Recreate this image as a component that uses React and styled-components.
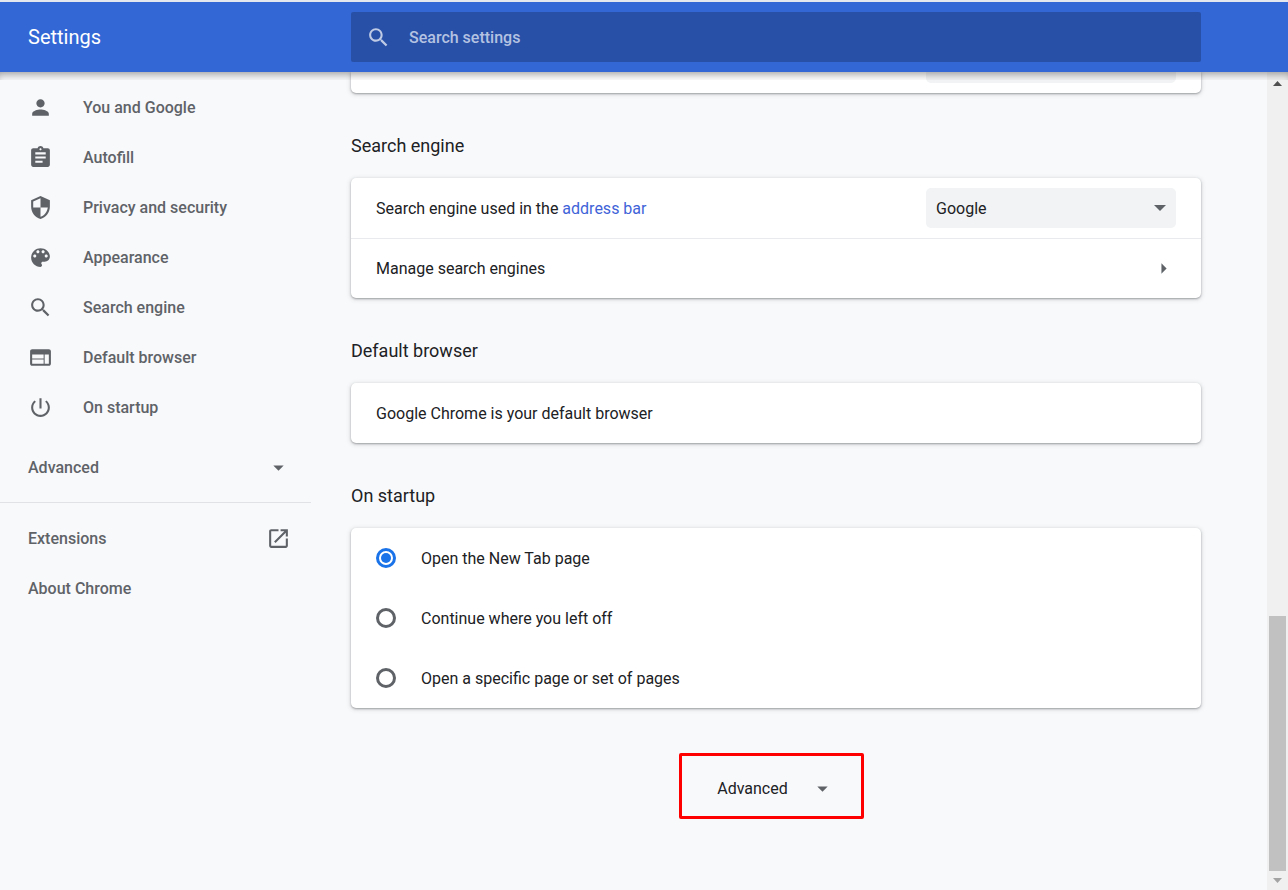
import React, { useState } from 'react';
import styled, { createGlobalStyle, css } from 'styled-components';

const GlobalStyle = createGlobalStyle`
  * {
    box-sizing: border-box;
  }

  body {
    margin: 0;
    background: #f8f9fb;
    color: #202124;
    font-family: Roboto, 'Liberation Sans', sans-serif;
    font-size: 16px;
    line-height: 25px;
  }
`;

const Page = styled.div`
  display: flex;
  flex-direction: column;
  min-height: 100vh;
  border-top: 2px solid #e4e8ee;
`;

const Header = styled.header`
  display: flex;
  align-items: center;
  height: 70px;
  padding: 0 87px 0 28px;
  background: #3367d6;
  color: #fff;
  position: relative;

  &::after {
    content: '';
    position: absolute;
    top: 100%;
    left: 0;
    right: 0;
    height: 8px;
    box-shadow: inset 0 6px 8px -4px rgba(0, 0, 0, 0.4);
    pointer-events: none;
  }
`;

const Title = styled.h1`
  flex: 0 0 323px;
  margin: 0;
  font-size: 20px;
  font-weight: 400;
`;

const SearchBox = styled.label`
  display: flex;
  flex: 1;
  align-items: center;
  gap: 18px;
  height: 50px;
  padding: 0 15px;
  border-radius: 2px;
  background: #2850a7;
  color: #bfcae5;
`;

const SearchInput = styled.input`
  flex: 1;
  min-width: 0;
  padding: 0;
  border: 0;
  outline: 0;
  background: transparent;
  color: #fff;
  font: inherit;
  font-weight: 500;

  &::placeholder {
    color: #b4c2e2;
    opacity: 1;
  }
`;

const Body = styled.div`
  display: flex;
  flex: 1;
`;

const Sidebar = styled.nav`
  flex: 0 0 311px;
  padding-top: 10px;
`;

const menuItem = css`
  display: flex;
  align-items: center;
  width: 100%;
  height: 50px;
  padding: 0 20px 0 28px;
  border: 0;
  background: transparent;
  color: #5f6368;
  font: inherit;
  font-weight: 500;
  text-align: left;
  text-decoration: none;
  cursor: pointer;
`;

const MenuLink = styled.a`
  ${menuItem}
  gap: 30px;
  justify-content: ${props => (props.$spread ? 'space-between' : 'flex-start')};
`;

const MenuToggle = styled.button`
  ${menuItem}
  justify-content: space-between;
  margin-top: 10px;
`;

const MenuDivider = styled.hr`
  margin: 10px 0;
  border: 0;
  border-top: 1px solid #e0e2e5;
`;

const Main = styled.main`
  flex: 1;
  min-width: 0;
  padding: 0 66px 45px 40px;
`;

const Card = styled.div`
  border-radius: ${props => (props.$cut ? '0 0 5px 5px' : '5px')};
  background: #fff;
  box-shadow: 0 1px 2px rgba(60, 64, 67, 0.4), 0 1px 4px 1px rgba(60, 64, 67, 0.15);
`;

const CutRow = styled.div`
  display: flex;
  justify-content: flex-end;
  height: 21px;
  padding: 0 25px;
`;

const CutSelect = styled.div`
  width: 250px;
  height: 11px;
  border-radius: 0 0 5px 5px;
  background: #f1f3f4;
`;

const SectionTitle = styled.h2`
  margin: 0;
  padding: 40px 0 20px;
  font-size: 18px;
  font-weight: 400;
`;

const Row = styled.div`
  display: flex;
  align-items: center;
  justify-content: space-between;
  height: 60px;
  padding: 0 25px;
`;

const RowButton = styled.button`
  display: flex;
  align-items: center;
  justify-content: space-between;
  width: 100%;
  height: 60px;
  padding: 0 25px;
  border: 0;
  border-top: 1px solid #e8eaed;
  background: transparent;
  color: inherit;
  font: inherit;
  cursor: pointer;
`;

const TextLink = styled.a`
  color: #3f63d8;
  text-decoration: none;
`;

const SelectWrap = styled.div`
  display: grid;
  align-items: center;
  width: 250px;

  > * {
    grid-area: 1 / 1;
  }
`;

const SelectArrow = styled.svg`
  justify-self: end;
  width: 12px;
  height: 6px;
  margin-right: 10px;
  fill: #5f6368;
  pointer-events: none;
`;

const Select = styled.select`
  width: 100%;
  height: 40px;
  padding: 0 10px;
  border: 0;
  border-radius: 5px;
  appearance: none;
  background: #f1f3f4;
  color: inherit;
  font: inherit;
`;

const RadioRow = styled.label`
  display: flex;
  align-items: center;
  gap: 25px;
  height: 60px;
  padding: 0 25px;
  cursor: pointer;
`;

const Radio = styled.input`
  width: 20px;
  height: 20px;
  margin: 0;
  padding: 2px;
  border: 3px solid #5f6368;
  border-radius: 50%;
  appearance: none;

  &:checked {
    border-color: #1a73e8;
    background: #1a73e8 content-box;
  }
`;

const AdvancedArea = styled.div`
  display: flex;
  justify-content: center;
  padding-top: 60px;
`;

const AdvancedButton = styled.button`
  display: flex;
  align-items: center;
  gap: 22px;
  height: 40px;
  padding: 0;
  border: 0;
  background: transparent;
  color: inherit;
  font: inherit;
  cursor: pointer;
  position: relative;

  &::after {
    content: '';
    position: absolute;
    inset: -15px -29px -11px -38px;
    border: 3px solid #fe0000;
    border-radius: 2px;
  }
`;

const Scrollbar = styled.div`
  display: flex;
  flex: 0 0 21px;
  flex-direction: column;
  align-items: center;
  background: #f0f0f0;
`;

const ScrollArrow = styled.svg`
  width: 9px;
  height: 5px;
  margin: ${props => (props.$down ? '7px 0' : '9px 0 7px')};
  fill: ${props => (props.$down ? '#a3a3a3' : '#505050')};
`;

const ScrollThumb = styled.div`
  width: 17px;
  height: 255px;
  margin-top: auto;
  background: #c1c1c1;
`;

const IconSvg = styled.svg`
  flex: none;
  width: 25px;
  height: 25px;
  fill: currentColor;
`;

const Caret = styled(IconSvg)`
  color: #5f6368;
`;

const icons = {
  person: 'M12 12c2.21 0 4-1.79 4-4s-1.79-4-4-4-4 1.79-4 4 1.79 4 4 4zm0 2c-2.67 0-8 1.34-8 4v2h16v-2c0-2.66-5.33-4-8-4z',
  assignment: 'M19 3h-4.18C14.4 1.84 13.3 1 12 1c-1.3 0-2.4.84-2.82 2H5c-1.1 0-2 .9-2 2v14c0 1.1.9 2 2 2h14c1.1 0 2-.9 2-2V5c0-1.1-.9-2-2-2zm-7 0c.55 0 1 .45 1 1s-.45 1-1 1-1-.45-1-1 .45-1 1-1zm2 14H7v-2h7v2zm3-4H7v-2h10v2zm0-4H7V7h10v2z',
  security: 'M12 1L3 5v6c0 5.55 3.84 10.74 9 12 5.16-1.26 9-6.45 9-12V5l-9-4zm0 10.99h7c-.53 4.12-3.28 7.79-7 8.94V12H5V6.3l7-3.11v8.8z',
  palette: 'M12 3c-4.97 0-9 4.03-9 9s4.03 9 9 9c.83 0 1.5-.67 1.5-1.5 0-.39-.15-.74-.39-1.01-.23-.26-.38-.61-.38-.99 0-.83.67-1.5 1.5-1.5H16c2.76 0 5-2.24 5-5 0-4.42-4.03-8-9-8zm-5.5 9c-.83 0-1.5-.67-1.5-1.5S5.67 9 6.5 9 8 9.67 8 10.5 7.33 12 6.5 12zm3-4C8.67 8 8 7.33 8 6.5S8.67 5 9.5 5s1.5.67 1.5 1.5S10.33 8 9.5 8zm5 0c-.83 0-1.5-.67-1.5-1.5S13.67 5 14.5 5s1.5.67 1.5 1.5S15.33 8 14.5 8zm3 4c-.83 0-1.5-.67-1.5-1.5S16.67 9 17.5 9s1.5.67 1.5 1.5-.67 1.5-1.5 1.5z',
  search: 'M15.5 14h-.79l-.28-.27C15.41 12.59 16 11.11 16 9.5 16 5.91 13.09 3 9.5 3S3 5.91 3 9.5 5.91 16 9.5 16c1.61 0 3.09-.59 4.23-1.57l.27.28v.79l5 4.99L20.49 19l-4.99-5zm-6 0C7.01 14 5 11.99 5 9.5S7.01 5 9.5 5 14 7.01 14 9.5 11.99 14 9.5 14z',
  web: 'M20 4H4c-1.1 0-1.99.9-1.99 2L2 18c0 1.1.9 2 2 2h16c1.1 0 2-.9 2-2V6c0-1.1-.9-2-2-2zm-5 14H4v-4h11v4zm0-5H4V9h11v4zm5 5h-4V9h4v9z',
  power: 'M13 3h-2v10h2V3zm4.83 2.17l-1.42 1.42C17.99 7.86 19 9.81 19 12c0 3.87-3.13 7-7 7s-7-3.13-7-7c0-2.19 1.01-4.14 2.58-5.42L6.17 5.17C4.23 6.82 3 9.26 3 12c0 4.97 4.03 9 9 9s9-4.03 9-9c0-2.74-1.23-5.18-3.17-6.83z',
  openInNew: 'M19 19H5V5h7V3H5c-1.11 0-2 .9-2 2v14c0 1.1.89 2 2 2h14c1.1 0 2-.9 2-2v-7h-2v7zM14 3v2h3.59l-9.83 9.83 1.41 1.41L19 6.41V10h2V3h-7z',
  caretDown: 'M7 10l5 5 5-5z',
  caretRight: 'M10 7v10l5-5z',
};

const menu = [
  { icon: 'person', label: 'You and Google' },
  { icon: 'assignment', label: 'Autofill' },
  { icon: 'security', label: 'Privacy and security' },
  { icon: 'palette', label: 'Appearance' },
  { icon: 'search', label: 'Search engine' },
  { icon: 'web', label: 'Default browser' },
  { icon: 'power', label: 'On startup' },
];

const startupOptions = [
  'Open the New Tab page',
  'Continue where you left off',
  'Open a specific page or set of pages',
];

const Icon = ({ name, as: Svg = IconSvg }) => (
  <Svg viewBox="0 0 24 24" aria-hidden="true">
    <path d={icons[name]} />
  </Svg>
);

const App = () => {
  const [startup, setStartup] = useState(startupOptions[0]);

  return (
    <Page>
      <GlobalStyle />
      <Header>
        <Title>Settings</Title>
        <SearchBox>
          <Icon name="search" />
          <SearchInput type="text" placeholder="Search settings" aria-label="Search settings" />
        </SearchBox>
      </Header>

      <Body>
        <Sidebar>
          {menu.map(item => (
            <MenuLink key={item.label} href="#">
              <Icon name={item.icon} />
              {item.label}
            </MenuLink>
          ))}
          <MenuToggle type="button">
            Advanced
            <Icon name="caretDown" />
          </MenuToggle>
          <MenuDivider />
          <MenuLink href="#" $spread>
            Extensions
            <Icon name="openInNew" />
          </MenuLink>
          <MenuLink href="#">About Chrome</MenuLink>
        </Sidebar>

        <Main>
          {/* end of the section scrolled under the header */}
          <Card $cut>
            <CutRow>
              <CutSelect />
            </CutRow>
          </Card>

          <SectionTitle>Search engine</SectionTitle>
          <Card>
            <Row>
              <span>
                Search engine used in the <TextLink href="#">address bar</TextLink>
              </span>
              <SelectWrap>
                <Select aria-label="Search engine used in the address bar" defaultValue="Google">
                  <option>Google</option>
                </Select>
                <SelectArrow viewBox="0 0 12 6" aria-hidden="true">
                  <path d="M0 0h12L6 6z" />
                </SelectArrow>
              </SelectWrap>
            </Row>
            <RowButton type="button">
              Manage search engines
              <Icon name="caretRight" as={Caret} />
            </RowButton>
          </Card>

          <SectionTitle>Default browser</SectionTitle>
          <Card>
            <Row>Google Chrome is your default browser</Row>
          </Card>

          <SectionTitle>On startup</SectionTitle>
          <Card>
            {startupOptions.map(option => (
              <RadioRow key={option}>
                <Radio
                  type="radio"
                  name="startup"
                  checked={startup === option}
                  onChange={() => setStartup(option)}
                />
                {option}
              </RadioRow>
            ))}
          </Card>

          <AdvancedArea>
            <AdvancedButton type="button">
              Advanced
              <Icon name="caretDown" as={Caret} />
            </AdvancedButton>
          </AdvancedArea>
        </Main>

        <Scrollbar aria-hidden="true">
          <ScrollArrow viewBox="0 0 9 5">
            <path d="M4.5 0L9 5H0z" />
          </ScrollArrow>
          <ScrollThumb />
          <ScrollArrow viewBox="0 0 9 5" $down>
            <path d="M0 0h9L4.5 5z" />
          </ScrollArrow>
        </Scrollbar>
      </Body>
    </Page>
  );
};

export default App;
